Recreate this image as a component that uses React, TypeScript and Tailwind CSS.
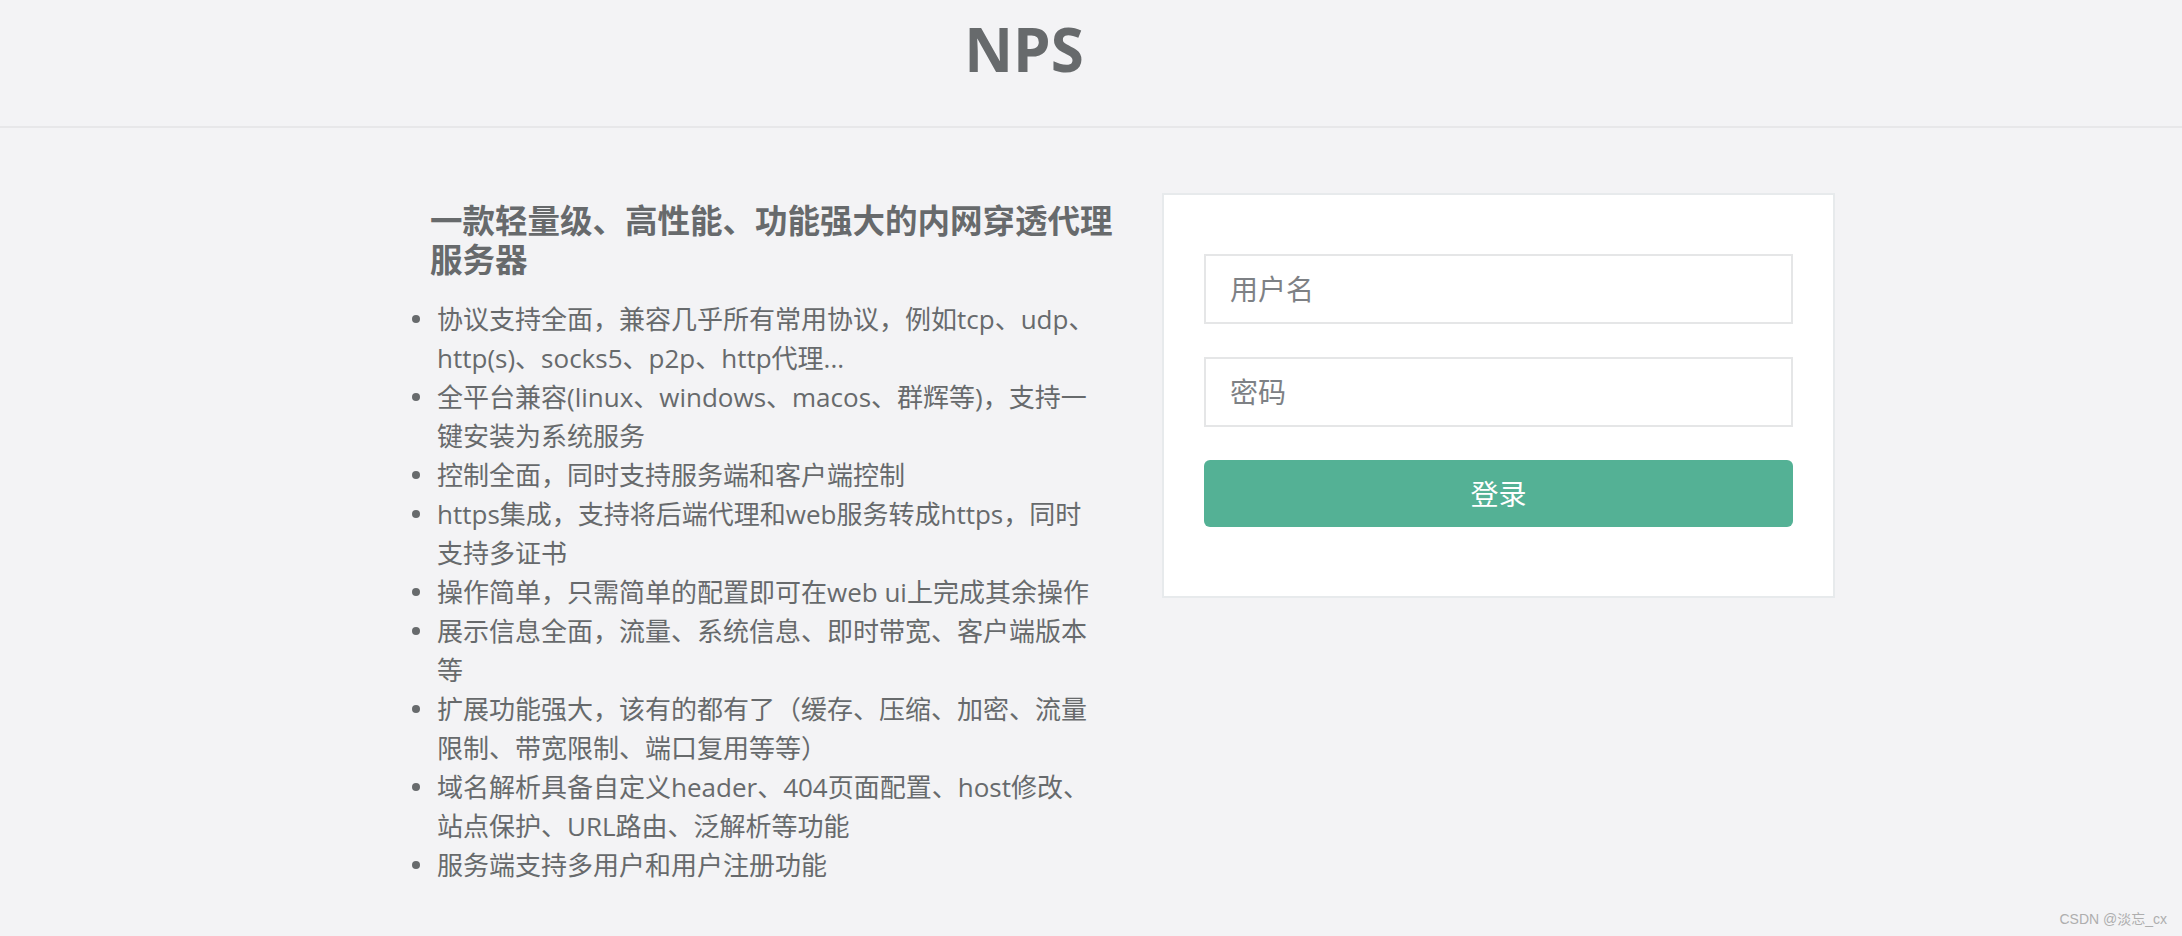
import React from 'react';

const features = [
  '协议支持全面，兼容几乎所有常用协议，例如tcp、udp、http(s)、socks5、p2p、http代理...',
  '全平台兼容(linux、windows、macos、群辉等)，支持一键安装为系统服务',
  '控制全面，同时支持服务端和客户端控制',
  'https集成，支持将后端代理和web服务转成https，同时支持多证书',
  '操作简单，只需简单的配置即可在web ui上完成其余操作',
  '展示信息全面，流量、系统信息、即时带宽、客户端版本等',
  '扩展功能强大，该有的都有了（缓存、压缩、加密、流量限制、带宽限制、端口复用等等）',
  '域名解析具备自定义header、404页面配置、host修改、站点保护、URL路由、泛解析等功能',
  '服务端支持多用户和用户注册功能',
];

const font = "font-['Open_Sans','Noto_Sans_CJK_SC',sans-serif]";

export default function App() {
  return (
    <div className={`relative min-h-screen bg-[#f3f3f5] text-[#676a6c] ${font}`}>
      {/* Header */}
      <div className="h-[128px] border-b-2 border-[#e7e7e9] flex justify-center pr-[134px] pt-[19px]">
        <h1 className="text-[60px] leading-none font-bold text-[#676a6c]">NPS</h1>
      </div>

      <div className="flex items-start pl-[412px] pt-[65px] gap-[63px]">
        {/* Intro */}
        <div className="w-[687px] shrink-0">
          <h3 className="mt-[9px] ml-[18px] w-[700px] text-[32.5px] leading-[38.5px] font-semibold">
            一款轻量级、高性能、功能强大的内网穿透代理服务器
          </h3>
          <ul className="mt-[21px] text-[26px] leading-[39px]">
            {features.map(f => (
              <li key={f} className="flex">
                <span className="w-[25px] shrink-0">
                  <span className="block w-[8px] h-[8px] rounded-full bg-[#676a6c] mt-[15px]" />
                </span>
                <span className="w-[662px]">{f}</span>
              </li>
            ))}
          </ul>
        </div>

        {/* Login card */}
        <div className="w-[673px] shrink-0 bg-white border-2 border-[#e7eaec] px-[40px] pt-[59px] pb-[69px]">
          <input
            className="block w-full h-[70px] bg-white border-2 border-[#e5e6e7] px-[24px] text-[28px] outline-none placeholder:text-[#7e8185] mb-[33px]"
            placeholder="用户名"
          />
          <input
            type="password"
            className="block w-full h-[70px] bg-white border-2 border-[#e5e6e7] px-[24px] text-[28px] outline-none placeholder:text-[#7e8185] mb-[33px]"
            placeholder="密码"
          />
          <button className="block w-full h-[67px] rounded-[6px] bg-[#54b195] text-white text-[28px] leading-none">
            登录
          </button>
        </div>
      </div>

      <div className="absolute right-[15px] bottom-[9px] text-[14px] leading-[16px] text-[#aeaeae] font-['Liberation_Sans','Noto_Sans_CJK_SC',sans-serif]">
        CSDN @淡忘_cx
      </div>
    </div>
  );
}
